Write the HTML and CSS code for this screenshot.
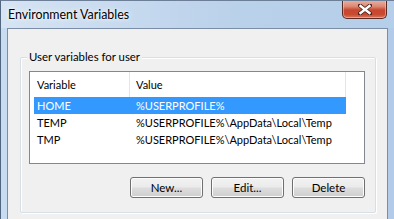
FILE: index.html
```html
<!DOCTYPE html>
<html>
<head>
<meta charset="utf-8">
<link rel="stylesheet" href="styles.css">
</head>
<body>
<div class="window">
  <div class="titlebar">
    <div class="title">Environment Variables</div>
    <div class="close">
      <svg width="14" height="11" viewBox="0 0 14 11">
        <path d="M2 1.5 L12 9.5 M12 1.5 L2 9.5" stroke="#4a2018" stroke-width="4" stroke-linecap="square" fill="none"/>
        <path d="M2.5 2 L11.5 9 M11.5 2 L2.5 9" stroke="#ffffff" stroke-width="2.4" stroke-linecap="square" fill="none"/>
      </svg>
    </div>
  </div>
  <div class="client">
    <fieldset class="group">
      <legend class="group-label">User variables for user</legend>
      <div class="group-body">
        <div class="list">
          <div class="list-header">
            <div class="col col-var">Variable</div>
            <div class="col col-val">Value</div>
          </div>
          <div class="row selected">
            <div class="cell cell-var">HOME</div>
            <div class="cell cell-val">%USERPROFILE%</div>
          </div>
          <div class="row">
            <div class="cell cell-var">TEMP</div>
            <div class="cell cell-val">%USERPROFILE%\AppData\Local\Temp</div>
          </div>
          <div class="row">
            <div class="cell cell-var">TMP</div>
            <div class="cell cell-val">%USERPROFILE%\AppData\Local\Temp</div>
          </div>
        </div>
        <div class="buttons">
          <button class="btn">New...</button>
          <button class="btn">Edit...</button>
          <button class="btn">Delete</button>
        </div>
      </div>
    </fieldset>
  </div>
</div>
</body>
</html>
```

FILE: styles.css
```css
html, body {
  margin: 0;
  padding: 0;
}
body {
  width: 394px;
  height: 219px;
  overflow: hidden;
  font-family: Lato, "Noto Sans", sans-serif;
  font-size: 11px;
  color: #000;
}
.window {
  width: 394px;
  height: 219px;
  box-sizing: border-box;
  overflow: hidden;
  display: flex;
  flex-direction: column;
  background: linear-gradient(90deg, #c9dcf0 0%, #bcd3ec 40%, #b2cbe8 100%);
  border-top: 1px solid #6c7f96;
  border-left: 1px solid #51667f;
}
.titlebar {
  height: 27px;
  flex: none;
  display: flex;
  align-items: flex-start;
  padding-left: 7px;
  background: linear-gradient(90deg, #d6e4f3 0%, #c7daef 30%, #bad1ea 60%, #b5cee9 100%);
}
.title {
  margin-top: 6px;
  line-height: 16px;
  font-size: 12.4px;
  text-shadow: 0 0 6px #ffffff, 0 0 3px #ffffff;
}
.close {
  margin-left: auto;
  margin-right: 7px;
  width: 45px;
  height: 19px;
  box-sizing: border-box;
  margin-top: -1px;
  border: 1px solid #5b2a22;
  border-top: none;
  border-radius: 0 0 5px 5px;
  background: linear-gradient(180deg, #eab3a6 0%, #dc8a75 35%, #c9472f 55%, #c74a30 80%, #d9785d 100%);
  box-shadow: inset 0 0 0 1px rgba(255, 220, 210, 0.45);
  display: flex;
  align-items: center;
  justify-content: center;
}
.client {
  flex: 1;
  margin: 0 6px 0 6px;
  background: #f0f0f0;
  border: 1px solid #7c8ea6;
  border-bottom: none;
  padding: 20px 11px 0 12px;
}
.group {
  margin: 0;
  padding: 0;
  border: 1px solid #d5dfe5;
  box-shadow: inset 1px 1px 0 #ffffff, 1px 1px 0 #ffffff;
  border-radius: 2px;
  min-width: 0;
}
.group-label {
  margin-left: 6px;
  padding: 0 2px;
  line-height: 16px;
  background: #f0f0f0;
  font-size: 11.4px;
}
.group-body {
  padding: 6px 10px 14px 8px;
}
.list {
  height: 93px;
  box-sizing: border-box;
  border: 1px solid #828790;
  background: #ffffff;
  overflow: hidden;
}
.list-header {
  display: flex;
  height: 25px;
}
.col {
  flex: none;
  box-sizing: border-box;
  padding-left: 7px;
  line-height: 25px;
  border-right: 1px solid #e5e5e5;
}
.col-var {
  width: 100px;
}
.col-val {
  width: 216px;
  padding-left: 6px;
}
.row {
  display: flex;
  height: 17px;
  line-height: 17px;
  margin-left: 4px;
  width: 312px;
}
.row.selected {
  background: #3399ff;
  color: #ffffff;
}
.cell {
  flex: none;
  white-space: nowrap;
}
.cell-var {
  width: 96px;
  padding-left: 3px;
  box-sizing: border-box;
}
.cell-val {
  padding-left: 6px;
}
.buttons {
  display: flex;
  justify-content: flex-end;
  gap: 8px;
  margin-top: 13px;
}
.btn {
  width: 73px;
  height: 21px;
  box-sizing: border-box;
  border: 1px solid #707070;
  border-radius: 3px;
  background: linear-gradient(180deg, #f2f2f2 0%, #ebebeb 48%, #dddddd 52%, #cfcfcf 100%);
  box-shadow: inset 0 0 0 1px #fcfcfc;
  font-family: Lato, "Noto Sans", sans-serif;
  font-size: 11.5px;
  color: #000;
  padding: 0;
  line-height: 18px;
}
```
